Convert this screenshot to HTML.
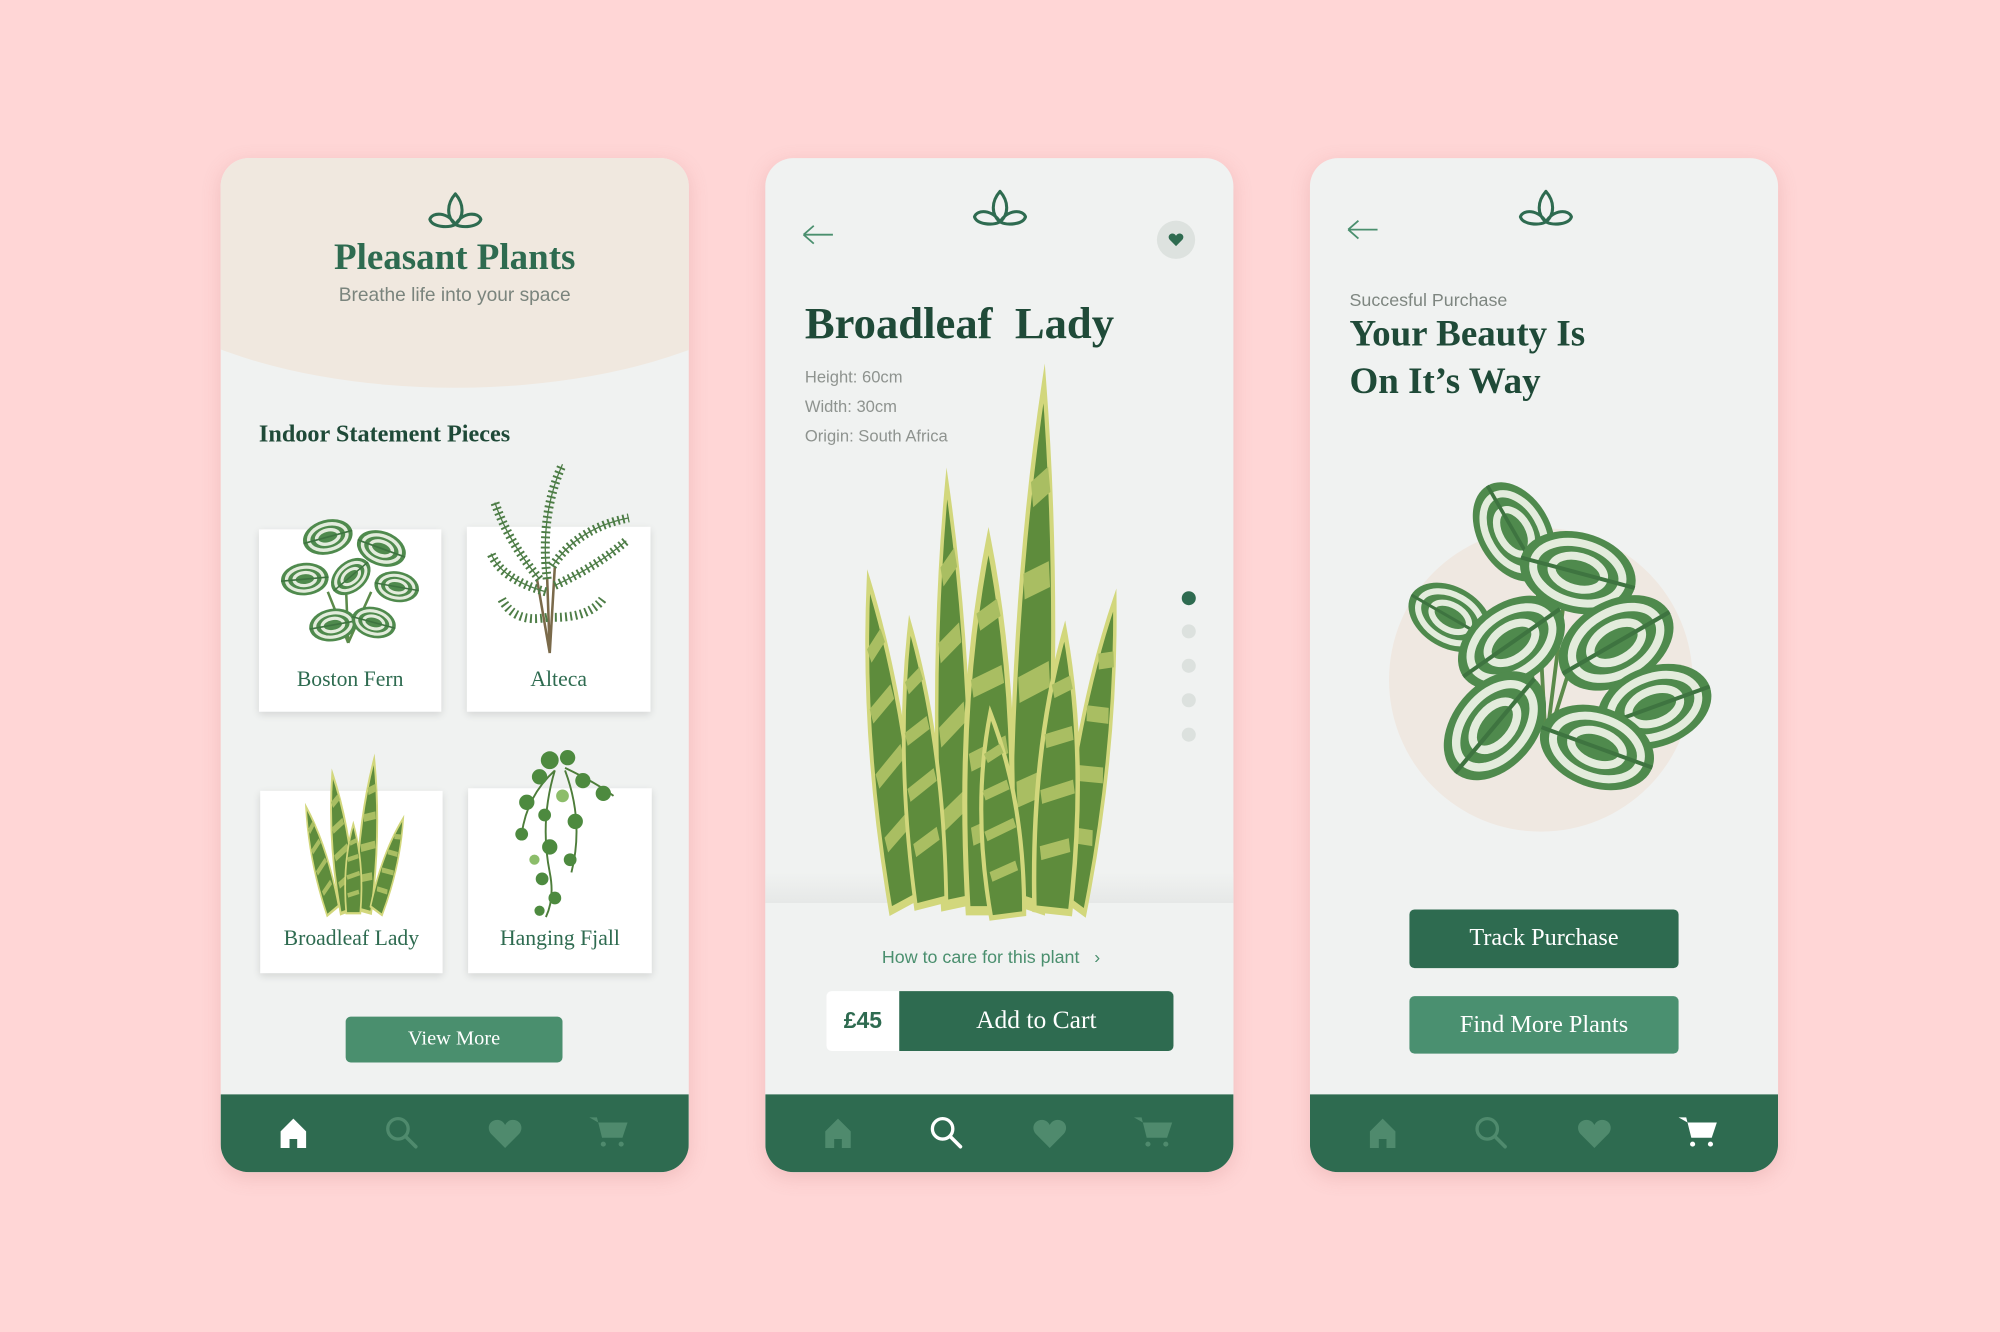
<!DOCTYPE html>
<html><head><meta charset="utf-8">
<style>
html,body{margin:0;padding:0;width:2000px;height:1332px;overflow:hidden;background:#ffd6d6;}
#s{position:absolute;left:0;top:0;width:1568px;height:1044px;transform:scale(1.27551);transform-origin:0 0;font-family:"Liberation Sans",sans-serif;}
.ph{position:absolute;top:124px;width:367px;height:795px;border-radius:22px;background:#f0f2f1;overflow:hidden;box-shadow:0 4px 14px rgba(200,120,120,.25);}
.nav{position:absolute;left:0;bottom:0;width:100%;height:61px;background:#2e6b50;}
.serif{font-family:"Liberation Serif",serif;}
.card{position:absolute;background:#fff;box-shadow:0 2px 6px rgba(0,0,0,.12);}
.lbl{position:absolute;width:100%;text-align:center;font-family:"Liberation Serif",serif;font-size:17px;color:#2e6b50;}
.abs{position:absolute;}
</style></head><body>
<div id="s">
<svg width="0" height="0" style="position:absolute">
<defs>
<g id="logo"><path d="M0,-14 C-7,-6 -7,4 0,10 C7,4 7,-6 0,-14Z M0,10 C-6,0 -18,0 -20,6 C-18,12 -6,13 0,10 C6,13 18,12 20,6 C18,0 6,0 0,10Z" fill="none" stroke="#2e6b50" stroke-width="2.4" stroke-linejoin="round"/></g>
<g id="sn"><path d="M-10,0 Q-16,-55 0,-100 Q16,-55 10,0Z" fill="#5e8c3c" stroke="#d2d77c" stroke-width="2.5"/><path d="M-8,-20 L8,-24 M-9,-40 L9,-45 M-8,-60 L7,-64 M-5,-78 L5,-82" stroke="#a9be62" stroke-width="5"/></g>
<g id="cl"><ellipse rx="22" ry="15" fill="#4f8a4d"/><ellipse rx="17" ry="11" fill="none" stroke="#e3ecdc" stroke-width="3"/><ellipse rx="10" ry="6" fill="none" stroke="#e3ecdc" stroke-width="3"/><path d="M-22,0 L22,0" stroke="#3e7440" stroke-width="1.5"/></g>
<g id="home"><path d="M-10,-2 L0,-12 L10,-2 L10,11 L3,11 L3,4 L-3,4 L-3,11 L-10,11Z"/></g>
<g id="srch"><circle cx="-3" cy="-3" r="8" fill="none" stroke-width="2.6"/><path d="M3,3 L11,11" stroke-width="2.8" stroke-linecap="round"/></g>
<g id="hrt"><path d="M0,11 L-11,0 C-15,-5 -12,-11 -6,-11 C-3,-11 -1,-9 0,-7 C1,-9 3,-11 6,-11 C12,-11 15,-5 11,0Z"/></g>
<g id="cart"><path d="M-16,-11 L-10,-11 L-6,5 L10,5 L14,-7 L-9,-7" /><circle cx="-5" cy="10" r="2"/><circle cx="9" cy="10" r="2"/></g>
</defs></svg>

<!-- PHONE 1 -->
<div class="ph" style="left:173px">
 <div class="abs" style="left:-96px;top:-64px;width:560px;height:244px;border-radius:50%;background:#f0e8df;"></div>
 <svg class="abs" style="left:0;top:0" width="367" height="60"><use href="#logo" x="184" y="42"/></svg>
 <div class="abs serif" style="left:0;top:62px;width:367px;text-align:center;font-size:29px;font-weight:bold;color:#2e6b50;">Pleasant Plants</div>
 <div class="abs" style="left:0;top:99px;width:367px;text-align:center;font-size:15px;color:#7a847d;">Breathe life into your space</div>
 <div class="abs serif" style="left:30px;top:206px;font-size:19px;font-weight:bold;color:#1f4a38;">Indoor Statement Pieces</div>
 <div class="card" style="left:30px;top:291px;width:143px;height:143px"><div class="lbl" style="top:108px">Boston Fern</div></div>
 <div class="card" style="left:193px;top:289px;width:144px;height:145px"><div class="lbl" style="top:110px">Alteca</div></div>
 <div class="card" style="left:31px;top:496px;width:143px;height:143px"><div class="lbl" style="top:106px">Broadleaf Lady</div></div>
 <div class="card" style="left:194px;top:494px;width:144px;height:145px"><div class="lbl" style="top:108px">Hanging Fjall</div></div>
 <svg class="abs" style="left:0;top:0" width="367" height="795">
  <g><path d="M100,380 L98,330 M100,380 L84,340 M100,380 L118,340" stroke="#5b8a4a" stroke-width="2"/>
  <use href="#cl" transform="translate(84,297) rotate(-15) scale(.9)"/><use href="#cl" transform="translate(126,306) rotate(20) scale(.9)"/>
  <use href="#cl" transform="translate(66,330) rotate(-5) scale(.85)"/><use href="#cl" transform="translate(138,336) rotate(10) scale(.8)"/>
  <use href="#cl" transform="translate(102,328) rotate(-40) scale(.8)"/><use href="#cl" transform="translate(88,366) rotate(-10) scale(.85)"/><use href="#cl" transform="translate(120,364) rotate(15) scale(.8)"/></g>
  <g stroke="#4d7d46" fill="none">
   <path d="M258,388 L256,330 M258,388 L262,320 M258,388 L248,330" stroke="#7a6a4a" stroke-width="2"/>
   <g stroke-width="7" stroke-dasharray="1.5 2.5">
    <path d="M256,330 Q250,280 268,240"/><path d="M260,320 Q280,290 320,282"/><path d="M250,330 Q225,300 215,270"/>
    <path d="M255,340 Q220,330 212,310"/><path d="M262,335 Q295,320 318,300"/><path d="M256,360 Q230,365 220,345"/><path d="M262,360 Q290,360 300,345"/>
   </g>
   <g stroke-width="1"><path d="M256,330 Q250,280 268,240 M260,320 Q280,290 320,282 M250,330 Q225,300 215,270 M255,340 Q220,330 212,310 M262,335 Q295,320 318,300"/></g>
  </g>
  <g><use href="#sn" transform="translate(100,590) scale(.6,1.1) rotate(-12)"/><use href="#sn" transform="translate(112,590) scale(.6,1.2) rotate(8)"/>
  <use href="#sn" transform="translate(88,590) scale(.5,.9) rotate(-25)"/><use href="#sn" transform="translate(122,590) scale(.5,.8) rotate(25)"/><use href="#sn" transform="translate(104,592) scale(.55,.7) rotate(0)"/></g>
  <g fill="#4d8a3f"><path d="M262,480 Q250,520 258,560 Q262,580 255,595 M270,480 Q285,520 275,560 M262,480 Q240,500 236,530 M270,478 Q295,490 308,500" stroke="#4d7d3a" stroke-width="1.5" fill="none"/>
  <circle cx="258" cy="472" r="7"/><circle cx="272" cy="470" r="6"/><circle cx="250" cy="485" r="6"/><circle cx="284" cy="488" r="6"/><circle cx="300" cy="498" r="6"/><circle cx="240" cy="505" r="6"/><circle cx="254" cy="515" r="5"/><circle cx="278" cy="520" r="6"/><circle cx="236" cy="530" r="5"/><circle cx="258" cy="540" r="6"/><circle cx="274" cy="550" r="5"/><circle cx="252" cy="565" r="5"/><circle cx="262" cy="580" r="5"/><circle cx="250" cy="590" r="4"/><circle cx="268" cy="500" r="5" fill="#8cbd6a"/><circle cx="246" cy="550" r="4" fill="#8cbd6a"/></g>
 </svg>
 <div class="abs serif" style="left:98px;top:673px;width:170px;height:36px;border-radius:4px;background:#4a8f6e;color:#fff;font-size:16px;text-align:center;line-height:36px;">View More</div>
 <div class="nav"><svg width="367" height="61">
  <use href="#home" x="57" y="31" fill="#fff"/>
  <use href="#srch" x="142" y="30" stroke="#4f8a6d"/>
  <use href="#hrt" x="223" y="31" fill="#4f8a6d"/>
  <use href="#cart" x="305" y="29" fill="#4f8a6d"/>
 </svg></div>
</div>

<!-- PHONE 2 -->
<div class="ph" style="left:600px">
 <div class="abs" style="left:0;top:560px;width:367px;height:24px;background:linear-gradient(#f0f2f1,#e6e8e7);"></div>
 <div class="abs" style="left:0;top:584px;width:367px;height:150px;background:#f0f2f1;"></div>
 <svg class="abs" style="left:0;top:0" width="367" height="600">
  <use href="#logo" x="184" y="40"/>
  <path d="M30,60 L53,60 M30,60 L38,53 M30,60 L38,67" stroke="#4a8f6e" stroke-width="1.4" fill="none"/>
  <circle cx="322" cy="64" r="15" fill="#dde2df"/>
  <use href="#hrt" transform="translate(322,64) scale(.45)" fill="#2e6b50"/>
  <circle cx="332" cy="345" r="5.5" fill="#2e6b50"/><circle cx="332" cy="371" r="5.5" fill="#dce1de"/><circle cx="332" cy="398" r="5.5" fill="#dce1de"/><circle cx="332" cy="425" r="5.5" fill="#dce1de"/><circle cx="332" cy="452" r="5.5" fill="#dce1de"/>
  <g>
   <use href="#sn" transform="translate(110,584) scale(1.2,2.6) rotate(-14)"/>
   <use href="#sn" transform="translate(240,584) scale(1.1,2.5) rotate(18)"/>
   <use href="#sn" transform="translate(150,584) scale(1.1,3.3) rotate(-4)"/>
   <use href="#sn" transform="translate(205,584) scale(1.3,4.1) rotate(6)"/>
   <use href="#sn" transform="translate(130,584) scale(1.2,2.2) rotate(-8)"/>
   <use href="#sn" transform="translate(175,590) scale(1.6,2.9) rotate(0)"/>
   <use href="#sn" transform="translate(225,590) scale(1.4,2.2) rotate(4)"/>
   <use href="#sn" transform="translate(190,594) scale(1.3,1.6) rotate(-6)"/>
  </g>
 </svg>
 <div class="abs serif" style="left:31px;top:110px;font-size:35px;font-weight:bold;color:#1f4a38;">Broadleaf&nbsp; Lady</div>
 <div class="abs" style="left:31px;top:160px;font-size:13px;color:#8e938f;line-height:23px;">Height: 60cm<br>Width: 30cm<br>Origin: South Africa</div>
 <div class="abs" style="left:0;top:618px;width:354px;text-align:center;font-size:14px;color:#4a8f6e;">How to care for this plant &nbsp;&nbsp;›</div>
 <div class="abs" style="left:48px;top:653px;width:57px;height:47px;background:#fff;border-radius:4px 0 0 4px;font-weight:bold;font-size:18px;color:#2e6b50;text-align:center;line-height:47px;">£45</div>
 <div class="abs serif" style="left:105px;top:653px;width:215px;height:47px;background:#2e6b50;border-radius:0 4px 4px 0;color:#fff;font-size:20px;text-align:center;line-height:47px;">Add to Cart</div>
 <div class="nav"><svg width="367" height="61">
  <use href="#home" x="57" y="31" fill="#4f8a6d"/>
  <use href="#srch" x="142" y="30" stroke="#fff"/>
  <use href="#hrt" x="223" y="31" fill="#4f8a6d"/>
  <use href="#cart" x="305" y="29" fill="#4f8a6d"/>
 </svg></div>
</div>

<!-- PHONE 3 -->
<div class="ph" style="left:1027px">
 <svg class="abs" style="left:0;top:0" width="367" height="560">
  <use href="#logo" x="185" y="40"/>
  <path d="M30,56 L53,56 M30,56 L38,49 M30,56 L38,63" stroke="#4a8f6e" stroke-width="1.4" fill="none"/>
  <circle cx="181" cy="409" r="119" fill="#efe8e1"/>
  <path d="M185,460 L178,330 M185,460 L200,340 M185,460 L165,360 M185,460 L210,380" stroke="#5b8a4a" stroke-width="3" fill="none"/>
  <use href="#cl" transform="translate(160,293) rotate(60) scale(1.9)"/>
  <use href="#cl" transform="translate(210,325) rotate(15) scale(2.1)"/>
  <use href="#cl" transform="translate(240,380) rotate(-30) scale(2.2)"/>
  <use href="#cl" transform="translate(110,360) rotate(30) scale(1.6)"/>
  <use href="#cl" transform="translate(158,380) rotate(-35) scale(2.1)"/>
  <use href="#cl" transform="translate(270,430) rotate(-20) scale(2.1)"/>
  <use href="#cl" transform="translate(145,445) rotate(-50) scale(2.2)"/>
  <use href="#cl" transform="translate(225,462) rotate(20) scale(2.1)"/>
 </svg>
 <div class="abs" style="left:31px;top:103px;font-size:14px;color:#7e8680;">Succesful Purchase</div>
 <div class="abs serif" style="left:31px;top:120px;font-size:29px;font-weight:bold;color:#1f4a38;line-height:37px;">Your Beauty Is<br>On It’s Way</div>
 <div class="abs serif" style="left:78px;top:589px;width:211px;height:46px;background:#2e6b50;border-radius:4px;color:#fff;font-size:19px;text-align:center;line-height:46px;">Track Purchase</div>
 <div class="abs serif" style="left:78px;top:657px;width:211px;height:45px;background:#4a9070;border-radius:4px;color:#fff;font-size:19px;text-align:center;line-height:45px;">Find More Plants</div>
 <div class="nav"><svg width="367" height="61">
  <use href="#home" x="57" y="31" fill="#4f8a6d"/>
  <use href="#srch" x="142" y="30" stroke="#4f8a6d"/>
  <use href="#hrt" x="223" y="31" fill="#4f8a6d"/>
  <use href="#cart" x="305" y="29" fill="#fff"/>
 </svg></div>
</div>
</div>
</body></html>
